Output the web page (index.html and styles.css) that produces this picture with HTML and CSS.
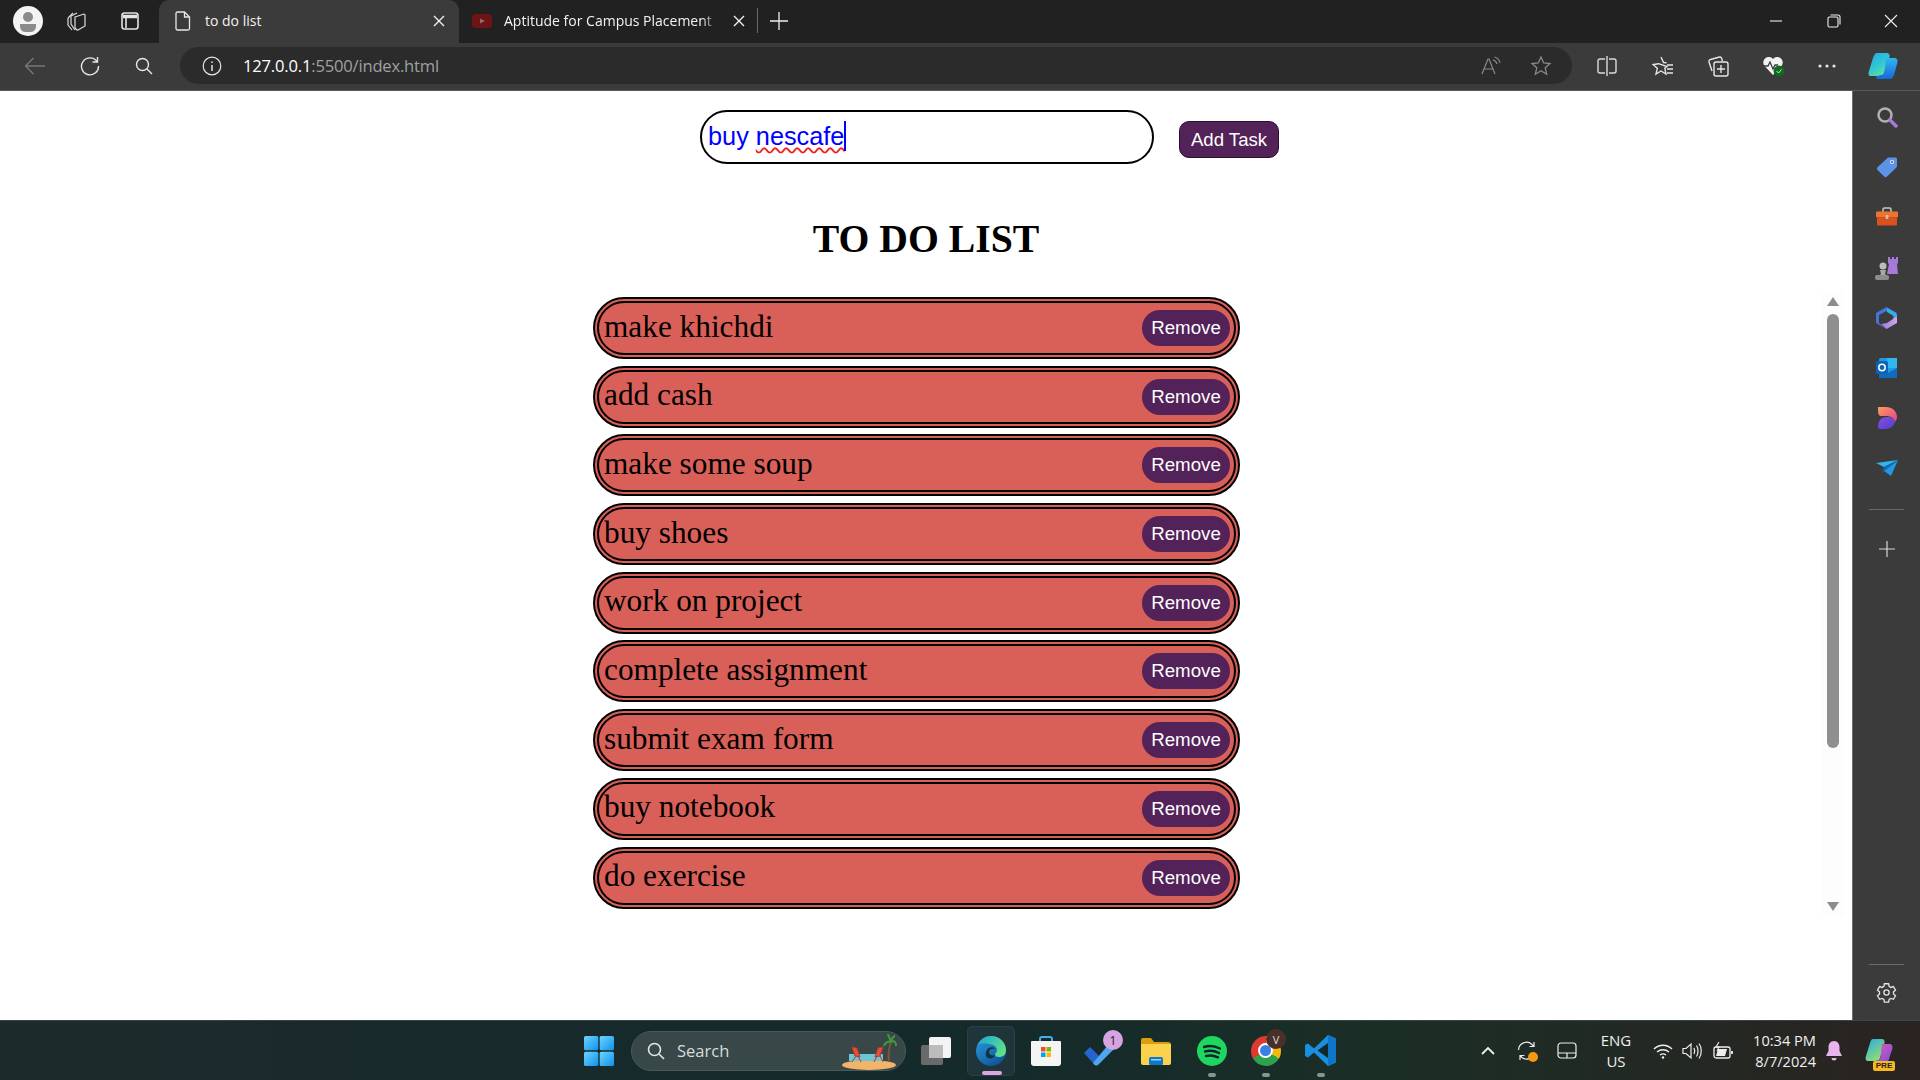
FILE: index.html
```html
<!DOCTYPE html>
<html lang="en">
<head>
<meta charset="utf-8">
<title>to do list</title>
<link rel="stylesheet" href="styles.css">
</head>
<body>
<header class="tabbar">
  <div class="slot s-avatar"><svg width="30" height="30" viewBox="0 0 30 30"><circle cx="15" cy="15" r="15" fill="#f4f4f4"/><circle cx="15" cy="11" r="5" fill="#8a8a8a"/><path d="M7 18h16v3a6 6 0 0 1-6 5h-4a6 6 0 0 1-6-5z" fill="#8a8a8a"/></svg></div>
  <div class="slot s-work"><svg width="24" height="24" viewBox="0 0 24 24" fill="none" stroke="#ddd" stroke-width="1.2"><path d="M3 9l5-5M3 9v7l4 5"/><path d="M6 7l6-3M6 7v8l4 6"/><path d="M10 8l9-3a1 1 0 0 1 1 1v11l-7 4a1 1 0 0 1-1 0l-2-2z"/></svg></div>
  <div class="slot s-vert"><svg width="20" height="20" viewBox="0 0 20 20" fill="none" stroke="#e4e4e4" stroke-width="1.6"><rect x="2" y="2" width="16" height="16" rx="2.5"/><path d="M3 5.5h14" stroke-width="3.5"/><path d="M6 7v10"/></svg></div>
  <div class="tab tab-active">
    <svg width="16" height="20" viewBox="0 0 16 20" fill="none" stroke="#e8e8e8" stroke-width="1.3"><path d="M2.5 1h7l5 5v11.5a1.5 1.5 0 0 1-1.500 1.500H2.500A1.500 1.500 0 0 1 1 17.500v-15A1.500 1.500 0 0 1 2.500 1z"/><path d="M9.500 1v5h5"/></svg>
    <span class="tab-title">to do list</span>
    <svg class="tab-x" width="12" height="12" viewBox="0 0 12 12" stroke="#f0f0f0" stroke-width="1.4"><path d="M1 1l10 10M11 1L1 11"/></svg>
  </div>
  <div class="tab tab-idle">
    <svg width="20" height="14" viewBox="0 0 20 14"><rect width="20" height="14" rx="3.500" fill="#6e1414"/><path d="M8 4.500l5 2.500-5 2.500z" fill="#8f6a6a"/></svg>
    <span class="tab-title tab-fade">Aptitude for Campus Placement</span>
    <svg class="tab-x" width="12" height="12" viewBox="0 0 12 12" stroke="#f0f0f0" stroke-width="1.4"><path d="M1 1l10 10M11 1L1 11"/></svg>
  </div>
  <div class="tab-sep"></div>
  <div class="slot s-plus"><svg width="18" height="18" viewBox="0 0 18 18" stroke="#eee" stroke-width="1.3"><path d="M9 0v18M0 9h18"/></svg></div>
  <div class="win-controls">
    <svg width="14" height="14" viewBox="0 0 14 14" stroke="#eee" stroke-width="1.1"><path d="M1 7h12"/></svg>
    <svg width="14" height="14" viewBox="0 0 14 14" fill="none" stroke="#eee" stroke-width="1.1"><rect x="1" y="3" width="10" height="10" rx="1.500"/><path d="M3.500 1H11a2 2 0 0 1 2 2v7.500"/></svg>
    <svg width="14" height="14" viewBox="0 0 14 14" stroke="#eee" stroke-width="1.1"><path d="M1 1l12 12M13 1L1 13"/></svg>
  </div>
</header>

<nav class="toolbar">
  <div class="slot t-back"><svg width="22" height="18" viewBox="0 0 22 18" fill="none" stroke="#787878" stroke-width="1.3"><path d="M21 9H2M9.500 1L1.500 9l8 8"/></svg></div>
  <div class="slot t-reload"><svg width="20" height="20" viewBox="0 0 20 20" fill="none" stroke="#e6e6e6" stroke-width="1.4"><path d="M17 5.500A8.500 8.500 0 1 0 18.500 10"/><path d="M17.500 1v5h-5"/></svg></div>
  <div class="slot t-search"><svg width="18" height="18" viewBox="0 0 18 18" fill="none" stroke="#e6e6e6" stroke-width="1.4"><circle cx="7.500" cy="7.500" r="6"/><path d="M12 12l5 5"/></svg></div>
  <div class="address">
    <svg width="20" height="20" viewBox="0 0 20 20" fill="none" stroke="#e6e6e6" stroke-width="1.2"><circle cx="10" cy="10" r="8.800"/><path d="M10 9v6M10 5.500v1.500" stroke-width="1.500"/></svg>
    <span class="url"><span class="url-host">127.0.0.1</span>:5500/index.html</span>
    <div class="addr-end">
      <svg width="20" height="20" viewBox="0 0 20 20" fill="none" stroke="#8a8a8a" stroke-width="1.2"><path d="M1 18L7 3h1l6 15M3.500 13h8"/><path d="M12 4c2 .5 3.500 2 4 4M13.500 1c3 .8 5 3 5.500 6"/></svg>
      <svg width="22" height="22" viewBox="0 0 22 22" fill="none" stroke="#8a8a8a" stroke-width="1.3"><path d="M11 2l2.700 6 6.300.6-4.800 4.200 1.500 6.400L11 15.800 5.300 19.200l1.500-6.400L2 8.600 8.300 8z"/></svg>
    </div>
  </div>
  <div class="tool-icons">
    <svg width="20" height="20" viewBox="0 0 20 20" fill="none" stroke="#dcdcdc" stroke-width="1.4"><path d="M8 3H3a2 2 0 0 0-2 2v10a2 2 0 0 0 2 2h5M12 3h5a2 2 0 0 1 2 2v10a2 2 0 0 1-2 2h-5M10 0v20"/></svg>
    <svg class="tool-fav" width="22" height="22" viewBox="0 0 22 22" fill="none" stroke="#e6e6e6" stroke-width="1.4"><path d="M9 2l2.500 5.500 3 .3M15 11.500l-2.200 1.800L14 19l-5-3-5 3 1.300-5.700L1 9.500l5.600-.8z"/><path d="M15 10h6M15 14h6M15 18h6"/></svg>
    <svg width="22" height="22" viewBox="0 0 22 22" fill="none" stroke="#e6e6e6" stroke-width="1.4"><path d="M5 16L2 7a2 2 0 0 1 1.500-2.500l9-2.500a2 2 0 0 1 2 1l1 3"/><rect x="7" y="7" width="14" height="14" rx="2"/><path d="M14 10v8M10 14h8"/></svg>
    <svg width="22" height="22" viewBox="0 0 22 22"><path d="M11 20L2.500 11A5.500 5.500 0 0 1 11 4a5.500 5.500 0 0 1 8.500 7z" fill="#f2f2f2"/><path d="M1 11h5l2-4 3 7 2-4h3" fill="none" stroke="#3b3b3b" stroke-width="1.300"/><circle cx="17" cy="16" r="5.500" fill="#0e6b1d"/><path d="M14.500 16l2 2 3-3.500" fill="none" stroke="#cfe6cf" stroke-width="1"/></svg>
    <svg width="20" height="20" viewBox="0 0 20 20" fill="#e6e6e6"><circle cx="3" cy="10" r="1.600"/><circle cx="10" cy="10" r="1.600"/><circle cx="17" cy="10" r="1.600"/></svg>
    <svg class="tool-copilot" width="30" height="28" viewBox="0 0 30 28">
      <defs>
        <linearGradient id="cpa" x1="0" y1="0" x2="0.600" y2="1"><stop offset="0" stop-color="#2aa7e8"/><stop offset="0.600" stop-color="#2fc9d0"/><stop offset="1" stop-color="#5fe0a0"/></linearGradient>
        <linearGradient id="cpb" x1="0.500" y1="0" x2="0.500" y2="1"><stop offset="0" stop-color="#31b6f2"/><stop offset="1" stop-color="#1668d8"/></linearGradient>
      </defs>
      <path d="M9 1h10c2 0 3 2 2.500 4L16 21c-.6 2-2 3-4 3H3c-2.500 0-3-2-2-5l4-13C6 3 7 1 9 1z" fill="url(#cpa)"/>
      <path d="M18 6h8c3 0 4 2 3.300 5l-3 11c-.8 3-2.300 5-5.300 5H10c-2 0-2-2-1-3l4-1c2 0 3-1 3.500-3z" fill="url(#cpb)"/>
    </svg>
  </div>
</nav>

<div class="middle">
  <main class="page">
    <div class="add-row">
      <div class="task-input" role="textbox">buy <span class="misspelt">nescafe</span><span class="caret"></span></div>
      <button class="add-btn" type="button">Add Task</button>
    </div>
    <h1 class="title">TO DO LIST</h1>
    <div class="list-region">
      <ul class="list">
        <li class="item"><span>make khichdi</span><button class="rm" type="button">Remove</button></li>
        <li class="item"><span>add cash</span><button class="rm" type="button">Remove</button></li>
        <li class="item"><span>make some soup</span><button class="rm" type="button">Remove</button></li>
        <li class="item"><span>buy shoes</span><button class="rm" type="button">Remove</button></li>
        <li class="item"><span>work on project</span><button class="rm" type="button">Remove</button></li>
        <li class="item"><span>complete assignment</span><button class="rm" type="button">Remove</button></li>
        <li class="item"><span>submit exam form</span><button class="rm" type="button">Remove</button></li>
        <li class="item"><span>buy notebook</span><button class="rm" type="button">Remove</button></li>
        <li class="item"><span>do exercise</span><button class="rm" type="button">Remove</button></li>
      </ul>
      <div class="scroll-track">
        <div class="arrow-up"></div>
        <div class="thumb"></div>
        <div class="arrow-down"></div>
      </div>
    </div>
  </main>
  <aside class="sidebar">
    <div class="side-slot"><svg width="22" height="22" viewBox="0 0 22 22" fill="none"><circle cx="9" cy="9" r="6.500" stroke="#b0b0b0" stroke-width="2.500"/><path d="M14 14l6 6" stroke="#a77ad8" stroke-width="3.500" stroke-linecap="round"/></svg></div>
    <div class="side-slot"><svg width="22" height="22" viewBox="0 0 22 22"><path d="M12 1.500h7.500a1.500 1.500 0 0 1 1.500 1.500v7a2 2 0 0 1-.6 1.400L11 20.500a2 2 0 0 1-2.800 0L1.500 14a2 2 0 0 1 0-2.800z" fill="#5d93e6"/><circle cx="16" cy="6" r="2" fill="#e8eefc"/><circle cx="16" cy="6" r=".9" fill="#2a4a88"/></svg></div>
    <div class="side-slot"><svg width="22" height="20" viewBox="0 0 22 20"><path d="M7 5V2.500A1.500 1.500 0 0 1 8.500 1h5A1.500 1.500 0 0 1 15 2.500V5" fill="none" stroke="#c8c8c8" stroke-width="1.500"/><rect y="4.500" width="22" height="6" rx="1" fill="#ef7430"/><rect x="1" y="10.500" width="20" height="8" rx="1" fill="#d9521d"/><rect x="9.500" y="8" width="3" height="4" rx="1" fill="#d8b8a8"/></svg></div>
    <div class="side-slot"><svg width="24" height="24" viewBox="0 0 24 24"><path d="M13 1h2v2h2V1h2v2h2V1h2v6l-1 1 1 10H12l2-10-1-1z" fill="#a57ad8"/><circle cx="8" cy="10" r="3.500" fill="#bcbcbc"/><path d="M5 14h6l-1 4 2 2H4l2-2z" fill="#a8a8a8"/><rect y="19" width="14" height="5" rx="2" fill="#8c8c8c"/></svg></div>
    <div class="side-slot"><svg width="21" height="22" viewBox="0 0 21 22"><defs><linearGradient id="m3a" x1="0" y1="0" x2="1" y2="1"><stop offset="0" stop-color="#2f7fe0"/><stop offset="1" stop-color="#7f58d0"/></linearGradient><linearGradient id="m3b" x1="0" y1="0" x2="1" y2="0"><stop offset="0" stop-color="#9a78e0"/><stop offset="1" stop-color="#d0a8e8"/></linearGradient></defs><path d="M10.500 0L21 6v10l-4-2V8L10.500 4 3 8v8l7.500 6L0 16V6z" fill="url(#m3a)"/><path d="M21 8v8l-10.500 6L5 17l6-1 6-4z" fill="url(#m3b)"/><path d="M11 1l9 5 1 5-5-3-5-3z" fill="#2bb4e8"/></svg></div>
    <div class="side-slot"><svg width="21" height="20" viewBox="0 0 21 20"><rect x="3" y="0" width="18" height="20" rx="1.500" fill="#1f9ae0"/><path d="M3 10l9 5 9-5v10H3z" fill="#0f6cbd"/><rect x="11" y="0" width="10" height="10" fill="#33b5ee"/><rect y="3" width="12" height="13" rx="1.500" fill="#0a63b8"/><circle cx="6" cy="9.500" r="3.200" fill="none" stroke="#fff" stroke-width="1.500"/></svg></div>
    <div class="side-slot"><svg width="20" height="22" viewBox="0 0 20 22"><defs><linearGradient id="dsa" x1="0" y1="0" x2="1" y2="1"><stop offset="0" stop-color="#ff9c55"/><stop offset="1" stop-color="#e0409a"/></linearGradient><linearGradient id="dsb" x1="0" y1="0" x2="1" y2="1"><stop offset="0" stop-color="#8a4fe0"/><stop offset="1" stop-color="#4d3fd0"/></linearGradient></defs><path d="M1 0h8c6 0 11 4 11 10 0 2-1 4-2 5-1-4-4-6-9-6H4C2 9 1 7 1 4z" fill="url(#dsa)"/><path d="M1 20c0-6 3-10 9-10 4 0 7 1 8 5-1 4-5 7-9 7H3c-1 0-2-1-2-2z" fill="url(#dsb)"/></svg></div>
    <div class="side-slot"><svg width="22" height="16" viewBox="0 0 22 16"><path d="M0 3l22-3-14 7z" fill="#35b4ee"/><path d="M22 0L15 16 8 11z" fill="#1f9ae0"/><path d="M8 7l14-7-14 11 -2 3z" fill="#0f6cbd"/></svg></div>
    <div class="side-rule"></div>
    <div class="side-slot"><svg width="16" height="16" viewBox="0 0 16 16" stroke="#d8d8d8" stroke-width="1.200"><path d="M8 0v16M0 8h16"/></svg></div>
    <div class="side-spacer"></div>
    <div class="side-rule side-rule-low"></div>
    <div class="side-slot side-gear"><svg width="21" height="21" viewBox="0 0 24 24" fill="none" stroke="#e4e4e4" stroke-width="1.500"><path d="M9.600 2h4.800l.6 3 2 1.200 2.900-1 2.400 4.100-2.300 2v2.400l2.300 2-2.400 4.100-2.900-1-2 1.200-.6 3H9.600l-.6-3-2-1.200-2.900 1-2.400-4.100 2.300-2v-2.400l-2.300-2 2.400-4.100 2.900 1 2-1.200z"/><circle cx="12" cy="12" r="3"/></svg></div>
  </aside>
</div>

<footer class="taskbar">
  <div class="task-center">
    <div class="tb tb-start"><svg width="30" height="30" viewBox="0 0 30 30"><defs><linearGradient id="wn" x1="0" y1="0" x2="1" y2="1"><stop offset="0" stop-color="#6fd6fb"/><stop offset="1" stop-color="#0f8fee"/></linearGradient></defs><rect width="14.300" height="14.300" rx="1.500" fill="url(#wn)"/><rect x="15.700" width="14.300" height="14.300" rx="1.500" fill="url(#wn)"/><rect y="15.700" width="14.300" height="14.300" rx="1.500" fill="url(#wn)"/><rect x="15.700" y="15.700" width="14.300" height="14.300" rx="1.500" fill="url(#wn)"/></svg></div>
    <div class="search">
      <svg width="18" height="18" viewBox="0 0 18 18" fill="none" stroke="#e2e6e6" stroke-width="1.600"><circle cx="7.500" cy="7.500" r="6"/><path d="M12 12l5 5"/></svg>
      <span class="search-label">Search</span>
      <svg class="beach" width="56" height="38" viewBox="0 0 56 38"><ellipse cx="28" cy="33" rx="27" ry="5" fill="#f1b46a"/><rect x="8" y="22" width="34" height="7" fill="#6cc6d8"/><path d="M48 30c-1-8 0-15 2-20" stroke="#7a5a2a" stroke-width="2" fill="none"/><path d="M50 10c-4-1-6 1-7 4M50 10c4-2 5 1 5 4M50 10c-1-4-3-6-3-8M50 10c1-4 3-6 4-6" stroke="#3f9a3f" stroke-width="2" fill="none"/><path d="M11 15l5 1 3 9-5-1zM11 30l4-6M20 30l-3-6" fill="#e0503a" stroke="#b8382a"/><path d="M42 15l-5 1-3 9 5-1zM42 30l-3-6M33 30l3-6" fill="#e0503a" stroke="#b8382a"/></svg>
    </div>
    <div class="tb tb-view"><svg width="30" height="28" viewBox="0 0 30 28"><rect x="8" y="0" width="22" height="21" rx="2" fill="#f4f4f4"/><rect y="8" width="22" height="20" rx="2" fill="#6a6a6a"/><rect x="8" y="8" width="14" height="13" fill="#bcbcbc"/></svg></div>
    <div class="tb tb-edge">
      <svg width="30" height="30" viewBox="0 0 30 30"><defs><linearGradient id="ed1" x1="0" y1="0" x2="0.800" y2="1"><stop offset="0" stop-color="#2a9fe0"/><stop offset="1" stop-color="#0c4f96"/></linearGradient><linearGradient id="ed2" x1="0" y1="0" x2="1" y2="0.600"><stop offset="0" stop-color="#1aa7d8"/><stop offset="1" stop-color="#5ee08a"/></linearGradient></defs><circle cx="15" cy="15" r="15" fill="url(#ed1)"/><path d="M2 8C5 3 10 0 15 0c8 0 15 6 15 14 0 5-3 7-7 7-3 0-4-1-4-3 2-2 3-5 0-8-3-2-12-4-17-2z" fill="url(#ed2)"/><path d="M19 19c-1 3-4 4-7 3-3-1-3-8 1-10 2-1 5-1 6 1-3-1-6 0-6 3 0 3 3 4 6 3z" fill="#13323c"/></svg>
      <span class="active-dot"></span>
    </div>
    <div class="tb tb-store"><svg width="30" height="30" viewBox="0 0 30 30"><path d="M9 6V3a2 2 0 0 1 2-2h8a2 2 0 0 1 2 2v3" fill="none" stroke="#3fb0e8" stroke-width="2"/><path d="M1 5h28a1 1 0 0 1 1 1v21a3 3 0 0 1-3 3H3a3 3 0 0 1-3-3V6a1 1 0 0 1 1-1z" fill="#f4f4f4"/><rect x="10" y="11" width="4.500" height="4.500" fill="#f25022"/><rect x="15.500" y="11" width="4.500" height="4.500" fill="#7fba00"/><rect x="10" y="16.500" width="4.500" height="4.500" fill="#00a4ef"/><rect x="15.500" y="16.500" width="4.500" height="4.500" fill="#ffb900"/></svg></div>
    <div class="tb tb-todo">
      <svg width="34" height="30" viewBox="0 0 34 30"><path d="M0 17l6-6 9 9-3 7c-1 1-2 1-3 0z" fill="#2564cf"/><path d="M9 27L29 3l5 6L14 29c-2 1-3 1-5-2z" fill="#4fa6ee"/></svg>
      <span class="badge badge-todo">1</span>
    </div>
    <div class="tb tb-files"><svg width="30" height="28" viewBox="0 0 30 28"><path d="M0 3a2 2 0 0 1 2-2h8l3 4h14a3 3 0 0 1 3 3v4H0z" fill="#d99f0e"/><path d="M0 7h30v19a2 2 0 0 1-2 2H2a2 2 0 0 1-2-2z" fill="#fbd24e"/><rect x="8" y="20" width="14" height="8" rx="1.500" fill="#1178c9"/><rect x="10" y="22" width="10" height="1.500" fill="#8fd0f5"/></svg></div>
    <div class="tb tb-spotify"><svg width="30" height="30" viewBox="0 0 30 30" fill="none"><circle cx="15" cy="15" r="15" fill="#1ed760"/><path d="M7 11c5-1.500 11-1 16 1.500M8 15.500c4.500-1.200 9.500-.8 14 1.500M9 20c4-1 8-.6 12 1.300" stroke="#10242a" stroke-width="2.400" stroke-linecap="round"/></svg><span class="run-dot"></span></div>
    <div class="tb tb-chrome"><div class="chrome-logo"><div class="chrome-ring"></div></div><span class="badge badge-chrome">V</span><span class="run-dot"></span></div>
    <div class="tb tb-code"><svg width="31" height="31" viewBox="0 0 31 31"><path d="M23 0l8 3.500v24L23 31 9 17.500 3 22.500l-3-1.500v-11l3-1.500 6 5z" fill="#1a8fe0"/><path d="M23 0l8 3.500v24L23 31z" fill="#0f75c8"/><path d="M23 8L12.500 15.500 23 23z" fill="#13282a"/></svg><span class="run-dot"></span></div>
  </div>
  <div class="tray">
    <svg class="tray-chev" width="14" height="9" viewBox="0 0 14 9" fill="none" stroke="#f0f0f0" stroke-width="1.800"><path d="M1 8l6-6 6 6"/></svg>
    <div class="tray-sync"><svg width="20" height="20" viewBox="0 0 20 20" fill="none" stroke="#eee" stroke-width="1.200"><path d="M1.500 9A8 8 0 0 1 15 3.500l2 2M17 1v4.500h-4.500"/><path d="M17.500 12A8 8 0 0 1 5 16.500l-2-2M3 19v-4.500h4.500"/></svg><span class="orange-dot"></span></div>
    <svg class="tray-pad" width="20" height="17" viewBox="0 0 20 17" fill="none" stroke="#eee" stroke-width="1.200"><rect x="1" y="1" width="18" height="15" rx="3"/><path d="M1 11h18M10 11v5"/></svg>
    <div class="tray-lang"><span>ENG</span><span>US</span></div>
    <svg class="tray-wifi" width="20" height="16" viewBox="0 0 20 16" fill="none" stroke="#f0f0f0" stroke-width="1.400"><path d="M1 6c5-5 13-5 18 0M4 9c3.500-3 8.500-3 12 0M7 12c2-1.500 4-1.500 6 0"/><circle cx="10" cy="14.500" r="1.200" fill="#f0f0f0" stroke="none"/></svg>
    <svg class="tray-vol" width="20" height="18" viewBox="0 0 20 18" fill="none" stroke="#eee" stroke-width="1.200"><path d="M1 6.500v5h3l5 4.500V2L4 6.500z"/><path d="M12 6c1 2 1 4 0 6M14.500 3.500c2 3 2 8 0 11M17 1.500c3 4 3 11 0 15"/></svg>
    <svg class="tray-batt" width="20" height="18" viewBox="0 0 20 18" fill="none" stroke="#eee" stroke-width="1.300"><rect x="1" y="5" width="16" height="11" rx="2"/><path d="M19 9v3" stroke-width="1.800"/><path d="M3 14l2-7h9l-2 7z" fill="#eee" stroke="none"/><path d="M6 0L3 5h3L4 9" stroke-width="1.100"/></svg>
    <div class="tray-clock"><span>10:34 PM</span><span>8/7/2024</span></div>
    <svg class="tray-bell" width="16" height="20" viewBox="0 0 16 20"><path d="M8 0c3.500 0 5.500 3 5.500 6v4L16 15H0l2.500-5V6C2.500 3 4.500 0 8 0z" fill="#e8b4ec"/><path d="M5.500 17h5a2.500 2.500 0 0 1-5 0z" fill="#e8b4ec"/></svg>
    <div class="tray-copilot">
      <svg width="28" height="26" viewBox="0 0 28 26"><defs><linearGradient id="cpc" x1="0" y1="0" x2="0.600" y2="1"><stop offset="0" stop-color="#2aa7e8"/><stop offset="1" stop-color="#8fe070"/></linearGradient><linearGradient id="cpd" x1="0" y1="0" x2="1" y2="1"><stop offset="0" stop-color="#e45ab0"/><stop offset="1" stop-color="#7a4fe0"/></linearGradient></defs><path d="M8 1h9c2 0 3 2 2.500 4L15 20c-.6 2-2 3-4 3H3c-2 0-3-2-2-5L5 5c.6-2 1.500-4 3-4z" fill="url(#cpc)"/><path d="M17 6h7c3 0 4 2 3.300 5l-3 9c-.6 2-1.300 5-4.300 5H10c-1 0-1-2 0-2l3-1c1 0 2-1 2.500-3z" fill="url(#cpd)"/></svg>
      <span class="pre-badge">PRE</span>
    </div>
  </div>
</footer>
</body>
</html>
```
FILE: styles.css
```css
* { box-sizing: border-box; }
html, body { margin: 0; height: 1080px; overflow: hidden; }
body { display: flex; flex-direction: column; width: 1920px; font-family: "Open Sans", "Noto Sans", sans-serif; background: #fff; }
svg { display: block; flex: none; }

/* tab strip */
.tabbar { height: 43px; background: #212121; display: flex; align-items: center; padding-bottom: 2px; flex: none; }
.slot { display: flex; align-items: center; justify-content: center; flex: none; }
.s-avatar { width: 56px; }
.s-work { width: 42px; }
.s-vert { width: 61px; padding-left: 3px; }
.tab { height: 43px; align-self: flex-start; display: flex; align-items: center; flex: none; color: #f2f2f2; font-size: 14px; }
.tab-active { width: 300px; background: #3b3b3b; border-radius: 10px 10px 0 0; padding: 0 14px 2px 16px; }
.tab-idle { width: 292px; padding: 0 6px 2px 13px; }
.tab-active .tab-title { margin-left: 14px; width: 222px; }
.tab-idle .tab-title { margin-left: 12px; width: 215px; white-space: nowrap; overflow: hidden; }
.tab-fade { -webkit-mask-image: linear-gradient(90deg, #000 92%, transparent); mask-image: linear-gradient(90deg, #000 92%, transparent); }
.tab-x { margin-left: auto; }
.tab-sep { width: 1px; height: 25px; background: #6a6a6a; margin-left: 6px; flex: none; }
.s-plus { width: 42px; }
.win-controls { margin-left: auto; display: flex; align-items: center; gap: 43.5px; padding-right: 22px; }

/* address bar */
.toolbar { height: 48px; background: #3b3b3b; border-bottom: 1px solid #5a5a5a; display: flex; align-items: center; padding-bottom: 2px; flex: none; }
.t-back { width: 66px; padding-left: 3px; }
.t-reload { width: 48px; }
.t-search { width: 66px; padding-right: 6px; }
.address { width: 1392px; height: 37px; background: #2b2b2b; border-radius: 19px; display: flex; align-items: center; padding: 0 20px 0 22px; flex: none; }
.url { margin-left: 21px; color: #a0a0a0; font-size: 16.6px; letter-spacing: -0.2px; }
.url-host { color: #fff; }
.addr-end { margin-left: auto; display: flex; align-items: center; gap: 29px; }
.tool-icons { display: flex; align-items: center; gap: 33px; margin-left: 25px; }
.tool-fav { margin-left: 2px; }
.tool-copilot { margin-left: -2px; }

/* middle */
.middle { height: 929px; display: flex; flex: none; }
.page { width: 1852px; background: #fff; display: flex; flex-direction: column; }
.sidebar { width: 68px; background: #3b3b3b; border-left: 1px solid #6e6e6e; display: flex; flex-direction: column; align-items: center; padding-top: 1px; }
.side-slot { height: 50.2px; display: flex; align-items: center; justify-content: center; flex: none; }
.side-rule { width: 35px; height: 1px; background: #6a6a6a; margin: 15px 0 14px; flex: none; }
.side-rule-low { margin: 0 0 3px; }
.side-spacer { flex: 1; }
.side-gear { margin-bottom: 2px; }

/* form */
.add-row { display: grid; grid-template-columns: 1fr 454px 1fr; padding: 19px 0 0 2px; }
.task-input { grid-column: 2; height: 54px; border: 2px solid #000; border-radius: 27px; padding: 0 6px 2px; display: flex; align-items: center; white-space: pre; color: #00f; font: 25.3px "Liberation Sans", Arial, sans-serif; }
.misspelt { text-decoration: underline wavy #e22; text-decoration-thickness: 1.5px; text-underline-offset: 2px; }
.caret { width: 2px; height: 30px; background: #00f; }
.add-btn { grid-column: 3; justify-self: start; margin: 11px 0 0 25px; width: 100px; height: 37px; border: 1px solid #2a1030; border-radius: 10px; background: #522259; color: #fff; font: 18.6px "Liberation Sans", Arial, sans-serif; padding: 0; }
.title { margin: 51px 0 0; text-align: center; font: bold 39.7px/48px "Liberation Serif", "Times New Roman", serif; color: #000; }

/* list */
.list-region { display: flex; justify-content: space-between; padding: 28px 8px 0 593px; }
.list { list-style: none; margin: 6px 0 0; padding: 0; width: 647px; display: flex; flex-direction: column; gap: 6.7px; }
.item { height: 62px; border: 6px double #000; border-radius: 31px; background: #d95f59; display: flex; align-items: center; justify-content: space-between; padding: 0 4px 0 5px; font: 31.3px "Liberation Serif", "Times New Roman", serif; color: #000; }
.item span { padding-bottom: 3px; }
.rm { width: 88px; height: 36px; border: 0; border-radius: 18px; background: #522259; color: #fff; font: 18.7px "Liberation Sans", Arial, sans-serif; padding: 0; }
.scroll-track { width: 22px; height: 625px; background: #fdfdfd; display: flex; flex-direction: column; align-items: center; padding-top: 6px; }
.arrow-up { width: 0; height: 0; border: 6px solid transparent; border-top: 0; border-bottom: 9px solid #8c8c8c; }
.thumb { width: 12px; height: 434px; margin-top: 8px; background: #8f8f8f; border-radius: 6px; }
.arrow-down { width: 0; height: 0; margin-top: 154px; border: 6px solid transparent; border-bottom: 0; border-top: 9px solid #8c8c8c; }

/* taskbar */
.taskbar { height: 60px; flex: none; border-top: 1px solid #3a4444; background: linear-gradient(90deg, #1d2a2c 0%, #142a2b 50%, #1b2e26 72%, #2a2321 100%); display: flex; align-items: center; color: #f0f0f0; }
.task-center { display: flex; align-items: center; padding-left: 584px; height: 100%; flex: none; }
.tb { position: relative; flex: none; height: 100%; display: flex; align-items: center; justify-content: center; }
.tb-start { width: 30px; margin-right: 17px; }
.search { width: 275px; height: 40px; background: #384849; border: 1px solid #4a5a5a; border-radius: 20px; display: flex; align-items: center; padding-left: 15px; position: relative; flex: none; }
.search-label { margin-left: 12px; font-size: 16.5px; color: #d6dcdc; padding-bottom: 1px; }
.beach { position: absolute; right: 8px; bottom: 0; }
.tb-view { width: 30px; margin-left: 15px; }
.tb-edge { width: 48px; height: 50px; margin-left: 16px; background: #20353a; border: 1px solid #2c4044; border-radius: 5px; }
.tb-store { width: 30px; margin-left: 16px; }
.tb-todo { width: 37px; margin-left: 21px; }
.tb-files { width: 30px; margin-left: 22px; }
.tb-spotify { width: 30px; margin-left: 26px; }
.tb-chrome { width: 33px; margin-left: 22px; }
.tb-code { width: 31px; margin-left: 23px; }
.active-dot { position: absolute; left: 14px; bottom: 0; width: 20px; height: 4px; border-radius: 2px; background: #dca6e6; }
.run-dot { position: absolute; left: 50%; margin-left: -4px; bottom: 3px; width: 8px; height: 4px; border-radius: 2px; background: #8a9494; }
.badge { position: absolute; display: flex; align-items: center; justify-content: center; border-radius: 50%; font-size: 12px; }
.badge-todo { right: -4px; top: 9px; width: 20px; height: 20px; background: #d6a4e2; color: #222; }
.badge-chrome { right: -4px; top: 8px; width: 20px; height: 20px; background: #4a2f2a; color: #ddd; font-size: 11px; }
.chrome-logo { width: 30px; height: 30px; border-radius: 50%; background: conic-gradient(#f3b90f 0 120deg, #2ca24c 120deg 240deg, #e0392f 240deg 360deg); display: flex; align-items: center; justify-content: center; }
.chrome-ring { width: 15px; height: 15px; border-radius: 50%; background: #3a7ee8; border: 2.5px solid #fff; }

.tray { flex: 1; height: 100%; display: flex; align-items: center; padding-left: 145px; }
.tray-sync { position: relative; margin-left: 22px; }
.orange-dot { position: absolute; right: -1px; bottom: -1px; width: 10px; height: 10px; border-radius: 50%; background: #f39a12; }
.tray-pad { margin-left: 20px; }
.tray-lang { width: 50px; margin-left: 14px; display: flex; flex-direction: column; align-items: center; font-size: 15px; line-height: 21px; }
.tray-wifi { margin-left: 12px; }
.tray-vol { margin-left: 9px; }
.tray-batt { margin-left: 11px; }
.tray-clock { width: 74px; margin-left: 9px; display: flex; flex-direction: column; align-items: flex-end; font-size: 14.6px; line-height: 21px; white-space: nowrap; }
.tray-bell { margin-left: 10px; }
.tray-copilot { position: relative; margin-left: 23px; }
.pre-badge { position: absolute; right: -2px; bottom: -7px; width: 22px; height: 10px; border-radius: 2px; background: #f5b81f; color: #222; font: bold 8px/10px "Liberation Sans", Arial, sans-serif; text-align: center; }
```
